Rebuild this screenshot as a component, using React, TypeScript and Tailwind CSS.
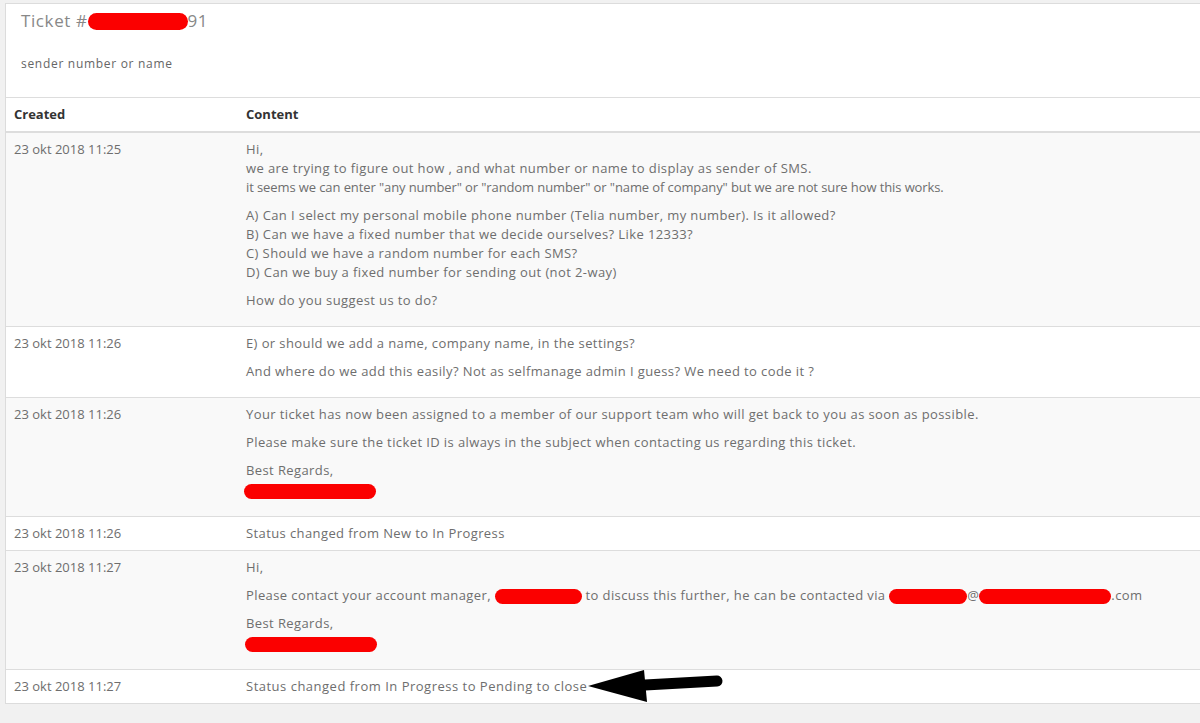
import React from "react";

const Pill = ({ w, h = 15 }: { w: number; h?: number }) => (
  <span
    className="inline-block bg-[#fb0000] rounded-full align-middle"
    style={{ width: w, height: h }}
  />
);

const rowCls = "border-t border-[#dddddd]";
const dateCls = "w-[232px] align-top px-[8px] py-[7px]";
const contentCls = "align-top px-[8px] py-[7px] tracking-[0.4px]";

export default function App() {
  return (
    <div
      className="relative min-h-[723px] bg-[#f1f1f1] overflow-hidden pt-[3px] pl-[5px] text-[#6e6e6e]"
      style={{ fontFamily: '"Open Sans", "Liberation Sans", sans-serif' }}
    >
      <div className="w-[1220px] bg-white border border-[#dcdcdc]">
        <div className="px-[15px] pt-[5px] pb-[25px]">
          <div className="text-[17px] leading-[24px] text-[#888888] flex items-center tracking-[0.6px]">
            <span>Ticket #</span>
            <Pill w={100} h={17} />
            <span>91</span>
          </div>
          <div className="mt-[22px] text-[12px] leading-[17px] text-[#666666] tracking-[0.7px]">
            sender number or name
          </div>
        </div>
        <table className="w-full border-collapse text-[13px] leading-[19px]">
          <thead>
            <tr className="border-t border-b-2 border-[#dddddd]">
              <th className="w-[232px] text-left font-bold text-[#333333] px-[8px] py-[7px]">Created</th>
              <th className="text-left font-bold text-[#333333] px-[8px] py-[7px]">Content</th>
            </tr>
          </thead>
          <tbody>
            <tr className="bg-[#f9f9f9]">
              <td className={dateCls}>23 okt 2018 11:25</td>
              <td className={contentCls}>
                <p className="mb-[9px]">
                  Hi,
                  <br />
                  we are trying to figure out how , and what number or name to display as sender of SMS.
                  <br />
                  <span className="tracking-[-0.1px]">
                    it seems we can enter "any number" or "random number" or "name of company" but we are not sure how this works.
                  </span>
                </p>
                <p className="mb-[9px]">
                  A) Can I select my personal mobile phone number (Telia number, my number). Is it allowed?
                  <br />
                  B) Can we have a fixed number that we decide ourselves? Like 12333?
                  <br />
                  C) Should we have a random number for each SMS?
                  <br />
                  D) Can we buy a fixed number for sending out (not 2-way)
                </p>
                <p className="mb-[9px]">How do you suggest us to do?</p>
              </td>
            </tr>
            <tr className={`${rowCls} bg-white`}>
              <td className={dateCls}>23 okt 2018 11:26</td>
              <td className={contentCls}>
                <p className="mb-[9px]">E) or should we add a name, company name, in the settings?</p>
                <p className="mb-[9px]">And where do we add this easily? Not as selfmanage admin I guess? We need to code it ?</p>
              </td>
            </tr>
            <tr className={`${rowCls} bg-[#f9f9f9]`}>
              <td className={dateCls}>23 okt 2018 11:26</td>
              <td className={contentCls}>
                <p className="mb-[9px]">
                  Your ticket has now been assigned to a member of our support team who will get back to you as soon as possible.
                </p>
                <p className="mb-[9px]">
                  Please make sure the ticket ID is always in the subject when contacting us regarding this ticket.
                </p>
                <p className="mb-[9px]">
                  Best Regards,
                  <br />
                  <span className="inline-block h-[19px] -ml-[2px] pt-[1px]">
                    <Pill w={132} />
                  </span>
                </p>
              </td>
            </tr>
            <tr className={`${rowCls} bg-white`}>
              <td className={dateCls}>23 okt 2018 11:26</td>
              <td className={contentCls}>Status changed from New to In Progress</td>
            </tr>
            <tr className={`${rowCls} bg-[#f9f9f9]`}>
              <td className={dateCls}>23 okt 2018 11:27</td>
              <td className={contentCls}>
                <p className="mb-[9px]">Hi,</p>
                <p className="mb-[9px] whitespace-nowrap">
                  Please contact your account manager, <Pill w={87} /> to discuss this further, he can be contacted via{" "}
                  <Pill w={78} />@<Pill w={132} />.com
                </p>
                <p className="mb-[9px]">
                  Best Regards,
                  <br />
                  <span className="inline-block h-[19px] -ml-[1px] pt-[1px]">
                    <Pill w={132} />
                  </span>
                </p>
              </td>
            </tr>
            <tr className={`${rowCls} bg-white`}>
              <td className={dateCls}>23 okt 2018 11:27</td>
              <td className={contentCls}>
                <span className="tracking-[0.5px]">Status changed from In Progress to Pending to close</span>
              </td>
            </tr>
          </tbody>
        </table>
      </div>
      <svg
        className="absolute left-[586px] top-[666px]"
        width="140"
        height="38"
        viewBox="0 0 140 38"
      >
        <polygon points="2,20 58,4 61,36" fill="#000" />
        <line x1="50" y1="19.5" x2="131" y2="15" stroke="#000" strokeWidth="11" strokeLinecap="round" />
      </svg>
    </div>
  );
}
